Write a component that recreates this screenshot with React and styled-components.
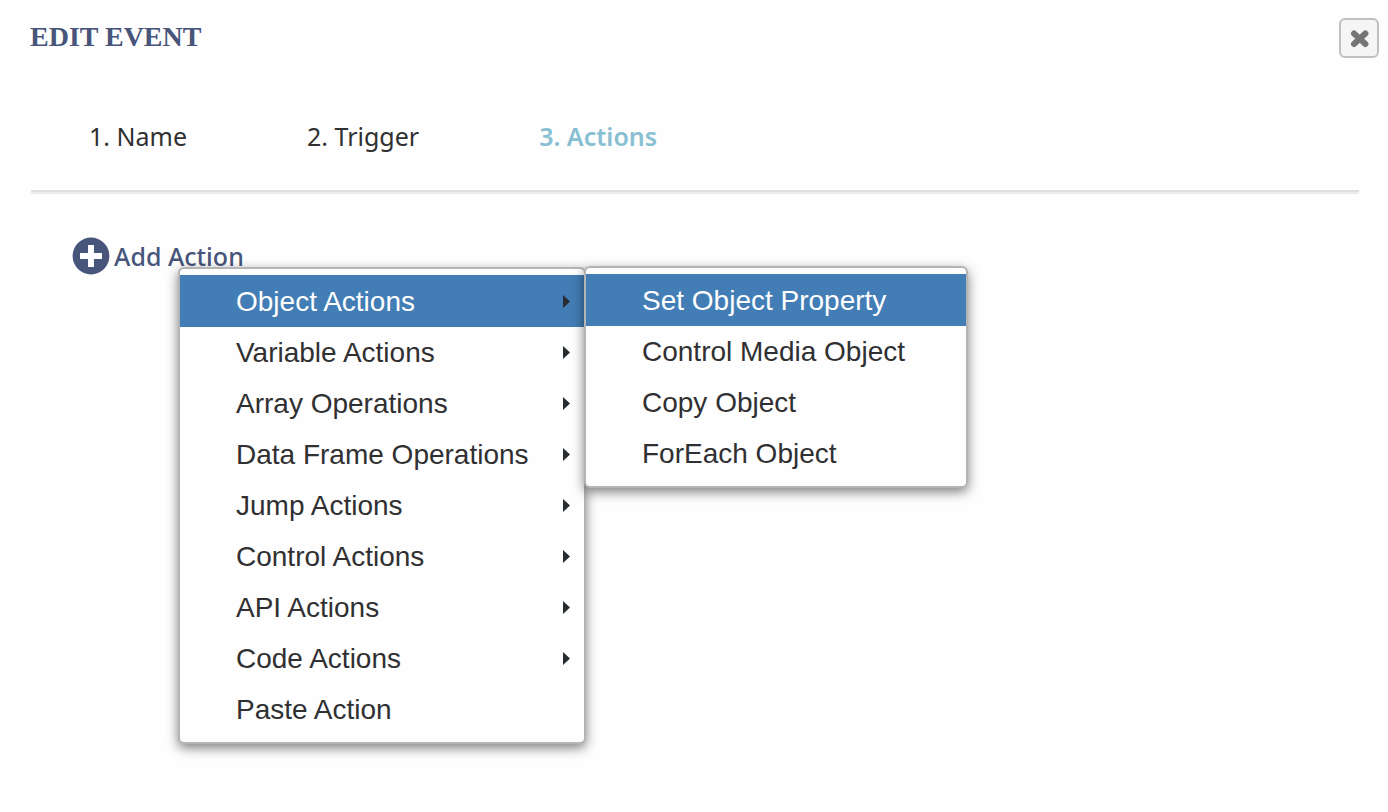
import React, { useState } from "react";
import styled, { createGlobalStyle } from "styled-components";

const GlobalStyle = createGlobalStyle`
  *, *::before, *::after { box-sizing: border-box; }
  body { margin: 0; background: #fefefe; color: #303032; }
  button { font: inherit; color: inherit; border: 0; margin: 0; padding: 0; background: none; cursor: pointer; }
`;

const Dialog = styled.main`
  min-height: 100vh;
  padding: 18px 9px 40px 30px;
`;

const Header = styled.header`
  display: flex;
  justify-content: space-between;
  align-items: flex-start;
`;

const Title = styled.h1`
  margin: 0;
  font: bold 28px/38px "Liberation Serif", serif;
  color: #48557a;
`;

const CloseButton = styled.button`
  && {
    display: flex;
    align-items: center;
    justify-content: center;
    width: 40px;
    height: 40px;
    border: 2px solid #c0c0c0;
    border-radius: 6px;
    background: #f5f5f5;
  }
`;

const Steps = styled.nav`
  display: flex;
  gap: 120px;
  margin: 58px 20px 0 1px;
  padding: 0 58px 34px;
  border-bottom: 2px solid #dedede;
  box-shadow: 0 2px 0 #ececec;
`;

const Step = styled.button`
  && {
    font: ${(p) => (p.$active ? 600 : 400)} 25px/40px "Noto Sans", sans-serif;
    color: ${(p) => (p.$active ? "#88bfd2" : "#303032")};
  }
`;

const Actions = styled.section`
  padding: 44px 42px 0;
`;

const AddWrap = styled.div`
  position: relative;
  display: inline-block;
`;

const AddButton = styled.button`
  && {
    display: flex;
    align-items: center;
    gap: 4px;
    font: 500 25px/40px "Noto Sans", sans-serif;
    color: #48557a;
  }
`;

const Menu = styled.ul`
  position: absolute;
  top: ${(p) => (p.$sub ? "-9px" : "31px")};
  left: ${(p) => (p.$sub ? "100%" : "106px")};
  z-index: 1;
  width: ${(p) => (p.$sub ? "384px" : "408px")};
  margin: 0;
  padding: 6px 0 8px;
  list-style: none;
  border: 2px solid #b4b4b4;
  border-radius: 6px;
  background: #fefefe;
  box-shadow: 0 4px 12px rgba(0, 0, 0, 0.5);
`;

const Item = styled.li`
  position: relative;
  height: 51px;
`;

const ItemButton = styled.button`
  && {
    display: flex;
    align-items: center;
    justify-content: space-between;
    width: 100%;
    height: 52px;
    padding: 2px 14px 0 56px;
    font: 28px/50px "Liberation Sans", sans-serif;
    text-align: left;
    white-space: nowrap;
    color: ${(p) => (p.$active ? "#fff" : "#303032")};
    background: ${(p) => (p.$active ? "#427db5" : "transparent")};
  }
`;

const Arrow = () => (
  <svg width="8" height="14" viewBox="0 0 8 14" aria-hidden="true">
    <path d="M1 0 8 6.5 1 13z" fill="#262c30" />
  </svg>
);

const PlusIcon = () => (
  <svg width="38" height="38" viewBox="0 0 38 38" aria-hidden="true">
    <circle cx="19" cy="19" r="18.4" fill="#48557a" />
    <path d="M16 8h6v8h8v6h-8v8h-6v-8H8v-6h8z" fill="#fefefe" />
  </svg>
);

const CrossIcon = () => (
  <svg width="22" height="22" viewBox="0 0 22 22" aria-hidden="true">
    <path d="M6 6.5 17.4 17M17.4 6.5 6 17" stroke="#757575" strokeWidth="6" strokeLinecap="round" />
  </svg>
);

const STEPS = ["1. Name", "2. Trigger", "3. Actions"];
const GROUPS = [
  "Object Actions",
  "Variable Actions",
  "Array Operations",
  "Data Frame Operations",
  "Jump Actions",
  "Control Actions",
  "API Actions",
  "Code Actions",
];
const OBJECT_ACTIONS = ["Set Object Property", "Control Media Object", "Copy Object", "ForEach Object"];

export default function App() {
  const [step, setStep] = useState(2);
  const [open, setOpen] = useState(true);
  return (
    <Dialog>
      <GlobalStyle />
      <Header>
        <Title>EDIT EVENT</Title>
        <CloseButton type="button" aria-label="Close">
          <CrossIcon />
        </CloseButton>
      </Header>
      <Steps>
        {STEPS.map((label, i) => (
          <Step key={label} type="button" $active={i === step} onClick={() => setStep(i)}>
            {label}
          </Step>
        ))}
      </Steps>
      <Actions>
        <AddWrap>
          <AddButton type="button" aria-expanded={open} onClick={() => setOpen(!open)}>
            <PlusIcon />
            Add Action
          </AddButton>
          {open && (
            <Menu>
              {GROUPS.map((label, i) => (
                <Item key={label}>
                  <ItemButton type="button" $active={i === 0}>
                    {label}
                    <Arrow />
                  </ItemButton>
                  {i === 0 && (
                    <Menu $sub>
                      {OBJECT_ACTIONS.map((name, n) => (
                        <Item key={name}>
                          <ItemButton type="button" $active={n === 0}>
                            {name}
                          </ItemButton>
                        </Item>
                      ))}
                    </Menu>
                  )}
                </Item>
              ))}
              <Item>
                <ItemButton type="button">Paste Action</ItemButton>
              </Item>
            </Menu>
          )}
        </AddWrap>
      </Actions>
    </Dialog>
  );
}
